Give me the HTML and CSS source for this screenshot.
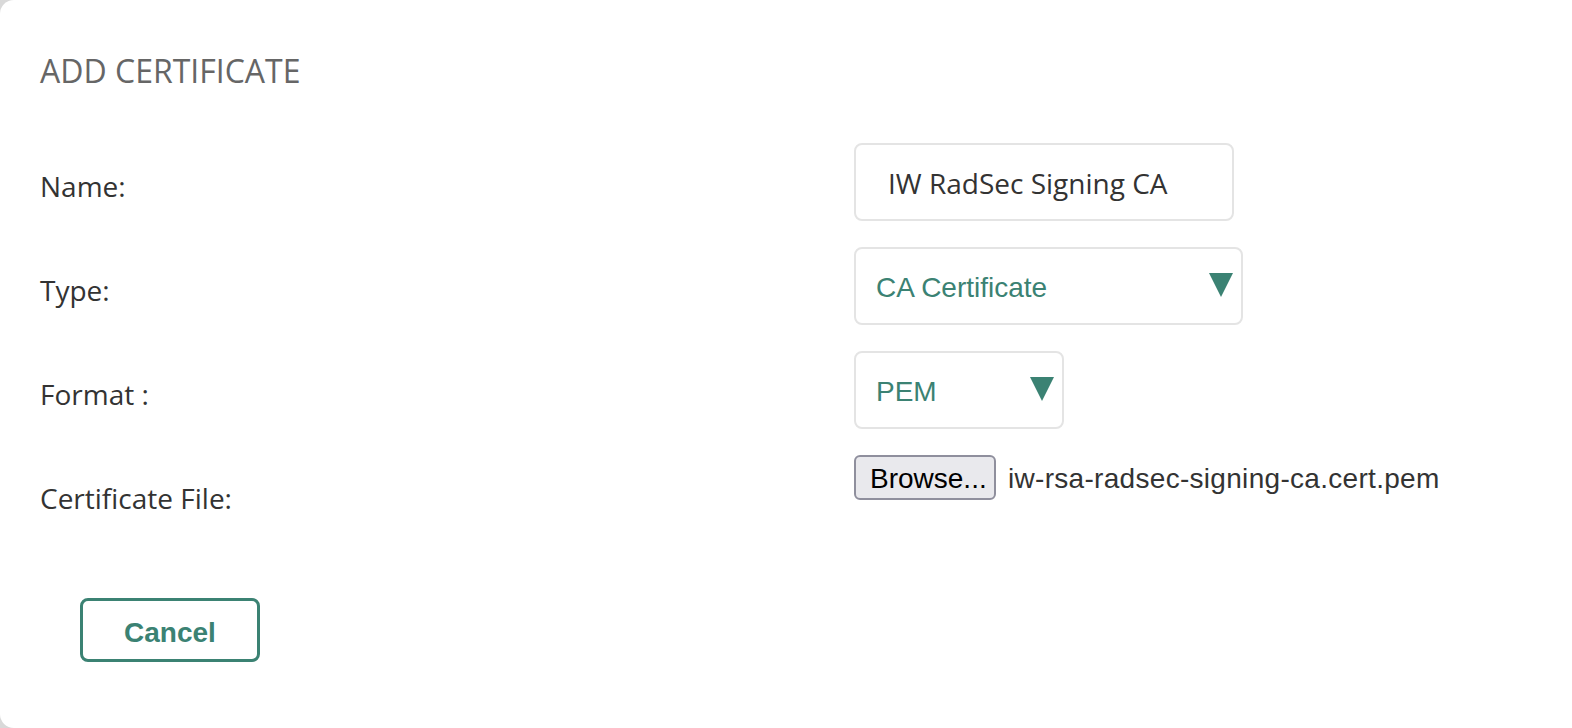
FILE: index.html
```html
<!DOCTYPE html>
<html lang="en">
<head>
<meta charset="utf-8">
<title>Add Certificate</title>
<link rel="stylesheet" href="styles.css">
</head>
<body>
<div class="modal">
  <h1 class="title">ADD CERTIFICATE</h1>
  <div class="form">
    <div class="label">Name:</div>
    <div class="control">
      <div class="input">IW RadSec Signing CA</div>
    </div>

    <div class="label">Type:</div>
    <div class="control">
      <div class="select select-type">
        <span class="select-value">CA Certificate</span>
        <svg class="arrow" width="24" height="24" viewBox="0 0 24 24"><polygon points="0,0 24,0 12,24" fill="#3b8273"/></svg>
      </div>
    </div>

    <div class="label">Format :</div>
    <div class="control">
      <div class="select select-format">
        <span class="select-value">PEM</span>
        <svg class="arrow" width="24" height="24" viewBox="0 0 24 24"><polygon points="0,0 24,0 12,24" fill="#3b8273"/></svg>
      </div>
    </div>

    <div class="label">Certificate File:</div>
    <div class="control file-control">
      <button class="browse" type="button">Browse...</button>
      <span class="filename">iw-rsa-radsec-signing-ca.cert.pem</span>
    </div>
  </div>
  <div class="actions">
    <button class="cancel" type="button">Cancel</button>
  </div>
</div>
</body>
</html>
```

FILE: styles.css
```css
html, body {
  margin: 0;
  padding: 0;
  height: 100%;
}

body {
  background: #d9d9d9;
  font-family: "Open Sans", "Liberation Sans", sans-serif;
  overflow: hidden;
}

.modal {
  box-sizing: border-box;
  height: 728px;
  width: 1600px;
  background: #ffffff;
  border-radius: 14px 0 0 14px;
  padding: 49px 0 0 40px;
}

.title {
  margin: 0;
  font-family: "Open Sans", sans-serif;
  font-weight: 400;
  font-size: 32px;
  line-height: 44px;
  color: #666666;
}

.form {
  margin-top: 50px;
  display: grid;
  grid-template-columns: 812px 1fr;
  grid-auto-rows: 78px;
  row-gap: 26px;
}

.label {
  font-size: 28px;
  line-height: 38px;
  padding-top: 24px;
  color: #333333;
}

.control {
  display: flex;
  align-items: flex-start;
  padding-left: 2px;
}

.input {
  box-sizing: border-box;
  width: 380px;
  height: 78px;
  border: 2px solid #e4e4e4;
  border-radius: 8px;
  padding: 2px 0 0 32px;
  display: flex;
  align-items: center;
  font-family: "Open Sans", sans-serif;
  font-size: 28px;
  color: #333333;
}

.select {
  box-sizing: border-box;
  height: 78px;
  border: 2px solid #e4e4e4;
  border-radius: 8px;
  padding: 0 8px 0 20px;
  display: flex;
  align-items: center;
  justify-content: space-between;
  font-family: "Liberation Sans", Arial, sans-serif;
  font-size: 28px;
  color: #3b8273;
}

.select-value {
  padding-top: 4px;
}

.select-type {
  width: 389px;
}

.select-format {
  width: 210px;
}

.arrow {
  display: block;
  margin-top: -2px;
}

.file-control {
  align-items: center;
  height: 45px;
}

.browse {
  box-sizing: border-box;
  width: 142px;
  height: 45px;
  margin: 0;
  padding: 2px 0 0 14px;
  text-align: left;
  background: #e9e9ed;
  border: 2px solid #8f8f9d;
  border-radius: 6px;
  font-family: "Liberation Sans", Arial, sans-serif;
  font-size: 28px;
  color: #000000;
}

.filename {
  margin-left: 12px;
  padding-top: 2px;
  font-family: "Liberation Sans", Arial, sans-serif;
  font-size: 28px;
  letter-spacing: 0.3px;
  color: #333333;
}

.actions {
  margin-top: 65px;
  padding-left: 40px;
}

.cancel {
  box-sizing: border-box;
  width: 180px;
  height: 64px;
  margin: 0;
  padding: 6px 0 0 0;
  background: #ffffff;
  border: 3px solid #3b8273;
  border-radius: 8px;
  font-family: "Liberation Sans", Arial, sans-serif;
  font-weight: 700;
  font-size: 28px;
  color: #3b8273;
}
```
